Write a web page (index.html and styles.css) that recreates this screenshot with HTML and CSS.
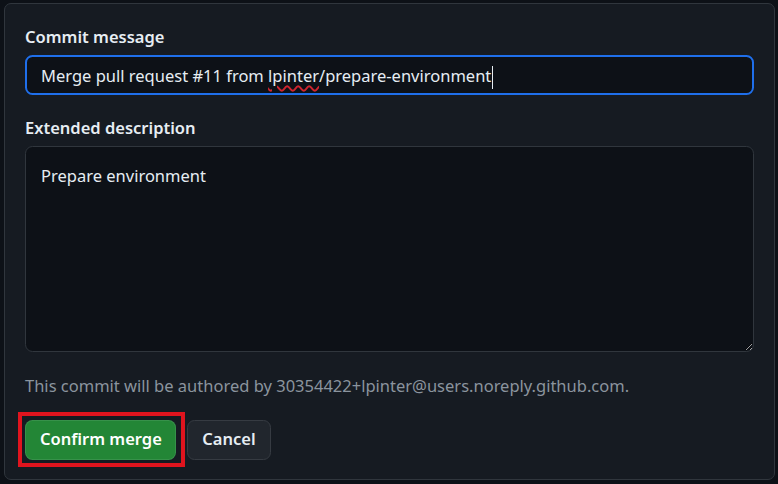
FILE: index.html
```html
<!DOCTYPE html>
<html lang="en">
<head>
<meta charset="utf-8">
<title>Merge pull request</title>
<link rel="stylesheet" href="styles.css">
</head>
<body>
<form class="merge-box">
  <div class="field">
    <label class="field-label">Commit message</label>
    <div class="text-input focused">Merge pull request #11 from <span class="misspelled">lpinter</span>/prepare-environment<span class="caret"></span></div>
  </div>
  <div class="field">
    <label class="field-label">Extended description</label>
    <textarea class="text-area" readonly>Prepare environment</textarea>
  </div>
  <p class="author-note">This commit will be authored by 30354422+lpinter@users.noreply.github.com.</p>
  <div class="actions">
    <span class="highlight"><button type="button" class="btn btn-primary">Confirm merge</button></span>
    <button type="button" class="btn btn-secondary">Cancel</button>
  </div>
</form>
</body>
</html>
```

FILE: styles.css
```css
html, body {
  margin: 0;
  padding: 0;
  background: #0d1117;
}
body {
  padding: 3px 3px 4px 4px;
  font-family: "Noto Sans", "Open Sans", sans-serif;
  font-size: 16.5px;
  color: #e6edf3;
  color-scheme: dark;
}
.merge-box {
  background: #161b22;
  border: 1px solid #30363d;
  border-radius: 7px;
  padding: 20px 20px 19px 20px;
  height: 477px;
  box-sizing: border-box;
  display: flex;
  flex-direction: column;
}
.field {
  display: flex;
  flex-direction: column;
  margin-bottom: 20px;
}
.field-label {
  font-weight: 600;
  line-height: 26px;
  margin-bottom: 5px;
}
.text-input {
  height: 40px;
  box-sizing: border-box;
  border: 2px solid #1f6feb;
  border-radius: 7.5px;
  background: #0d1117;
  padding: 1px 14px 0 14px;
  line-height: 36px;
  white-space: nowrap;
}
.misspelled {
  text-decoration: underline wavy #d1242f;
  text-decoration-thickness: 1.5px;
  text-underline-offset: 3px;
}
.caret {
  display: inline-block;
  width: 1px;
  height: 23px;
  background: #e6edf3;
  margin-left: 1px;
  vertical-align: middle;
}
.text-area {
  height: 206px;
  box-sizing: border-box;
  border: 1px solid #30363d;
  border-radius: 7.5px;
  background: #0d1117;
  color: #e6edf3;
  font: inherit;
  line-height: 26px;
  padding: 16px 15px;
  resize: vertical;
  outline: none;
}
.author-note {
  margin: 1px 0 21px 0;
  line-height: 26px;
  color: #8b949e;
}
.actions {
  display: flex;
  align-items: center;
  gap: 2px;
}
.highlight {
  display: inline-flex;
  border: 4px solid #e0141e;
  padding: 4px 5px 3px 3px;
  margin: -8px 0 -7px -7px;
}
.btn {
  height: 40px;
  box-sizing: border-box;
  border-radius: 7.5px;
  font: inherit;
  font-weight: 600;
  padding: 0 14px 3px 14px;
  color: #ffffff;
  white-space: nowrap;
  cursor: pointer;
}
.btn-primary {
  background: #238636;
  border: 1px solid rgba(240, 246, 252, 0.1);
  width: 151px;
}
.btn-secondary {
  background: #21262d;
  border: 1px solid #363b42;
  color: #e6edf3;
  width: 84px;
}
```
